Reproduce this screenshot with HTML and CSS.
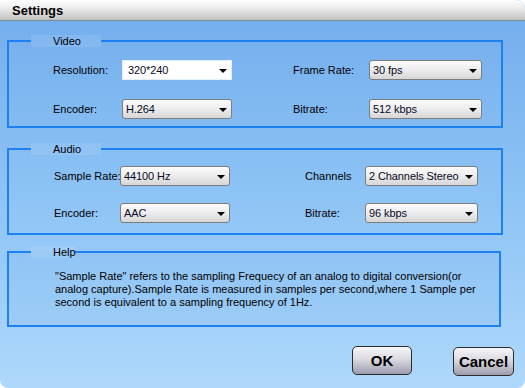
FILE: index.html
```html
<!DOCTYPE html>
<html lang="en">
  <head>
    <meta charset="UTF-8" />
    <title>Settings</title>
    <link rel="stylesheet" href="styles.css">
  </head>
  <body>
    <div class="window">
      <div class="titlebar">Settings</div>
      <div class="content">
        <fieldset class="group group-video">
          <legend>Video</legend>
          <div class="grid grid-video">
            <span class="label">Resolution:</span>
            <div class="combo combo-flat">320*240</div>
            <span class="label">Frame Rate:</span>
            <div class="combo">30 fps</div>
            <span class="label">Encoder:</span>
            <div class="combo">H.264</div>
            <span class="label">Bitrate:</span>
            <div class="combo">512 kbps</div>
          </div>
        </fieldset>
        <fieldset class="group group-audio">
          <legend>Audio</legend>
          <div class="grid grid-audio">
            <span class="label">Sample Rate:</span>
            <div class="combo">44100 Hz</div>
            <span class="label">Channels</span>
            <div class="combo">2 Channels Stereo</div>
            <span class="label">Encoder:</span>
            <div class="combo">AAC</div>
            <span class="label">Bitrate:</span>
            <div class="combo">96 kbps</div>
          </div>
        </fieldset>
        <fieldset class="group group-help">
          <legend class="legend-short">Help</legend>
          <p class="help-text">"Sample Rate" refers to the sampling Frequecy of an analog to digital conversion(or<br>analog capture).Sample Rate is measured in samples per second,where 1 Sample per<br>second is equivalent to a sampling frequency of 1Hz.</p>
        </fieldset>
        <div class="buttons">
          <button class="btn btn-ok">OK</button>
          <button class="btn btn-cancel">Cancel</button>
        </div>
      </div>
    </div>
  </body>
</html>
```

FILE: styles.css
```css
body {
  margin: 0;
  padding: 0;
  background: #fff;
  font-family: "Liberation Sans", Arial, sans-serif;
  font-size: 11px;
  color: #000;
}
.window {
  width: 525px;
  height: 388px;
  box-sizing: border-box;
  background: linear-gradient(#72acec, #8dc3f5 50%, #aed8fb);
  border-top-right-radius: 9px;
  border-bottom-left-radius: 8px;
  border-bottom-right-radius: 8px;
  overflow: hidden;
}
.titlebar {
  height: 20px;
  line-height: 22px;
  padding-left: 12px;
  font-size: 13px;
  font-weight: bold;
  color: #000;
  background: linear-gradient(#ffffff, #ececec 40%, #c2c2c2);
  border-bottom: 1px solid #7c8a9a;
}
.content {
  padding: 0 0 0 7px;
}
.group {
  width: 496px;
  box-sizing: border-box;
  margin: 0;
  border: 2px solid #1f80f2;
  padding: 0;
  min-width: 0;
}
.group legend {
  margin-left: 22px;
  padding: 0 0 0 22px;
  width: 70px;
  box-sizing: border-box;
  height: 12px;
  line-height: 12px;
  font-size: 11px;
  text-align: left;
  background: rgba(255, 255, 255, 0.09);
}
.group legend.legend-short {
  width: 44px;
}
.group-video {
  margin-top: 14px;
  padding: 13px 0 7px 0;
}
.group-audio {
  margin-top: 15px;
  padding: 11px 0 10px 0;
}
.group-help {
  width: 494px;
  margin-top: 11px;
  padding: 12px 0 16px 0;
  background: rgba(40, 110, 220, 0.05);
}
.grid {
  display: grid;
  align-items: center;
}
.grid-video {
  padding-left: 44px;
  grid-template-columns: 69px 171px 76px 113px;
  grid-template-rows: 20px 20px;
  row-gap: 19px;
}
.grid-audio {
  padding-left: 45px;
  grid-template-columns: 66px 185px 60px 113px;
  grid-template-rows: 20px 20px;
  row-gap: 17px;
}
.label {
  white-space: nowrap;
}
.combo {
  position: relative;
  width: 110px;
  height: 20px;
  box-sizing: border-box;
  padding-left: 3px;
  line-height: 19px;
  color: #0a0a28;
  border: 1px solid #7d7d7d;
  border-radius: 3px;
  background: linear-gradient(#fbfbfb, #eeeeee 45%, #d6d6d6);
  white-space: nowrap;
  letter-spacing: -0.1px;
}
.grid-video .combo:nth-child(4),
.grid-video .combo:nth-child(8),
.grid-audio .combo:nth-child(4),
.grid-audio .combo:nth-child(8) {
  width: 113px;
}
.combo::after {
  content: "";
  position: absolute;
  right: 4px;
  top: 8px;
  border-left: 4px solid transparent;
  border-right: 4px solid transparent;
  border-top: 4px solid #000;
}
.combo-flat {
  background: #fff;
  border-color: #e4eef8;
  border-radius: 0;
  padding-left: 5px;
}
.help-text {
  margin: 0;
  padding-left: 46px;
  line-height: 13px;
  font-size: 11px;
}
.buttons {
  display: flex;
  justify-content: flex-end;
  gap: 41px;
  margin-top: 19px;
  padding-right: 11px;
}
.btn {
  height: 29px;
  padding: 0;
  box-sizing: border-box;
  border: 1px solid #2c2c2c;
  border-radius: 5px;
  background: linear-gradient(#f6f6f8, #dadae0 45%, #9c9cb0);
  font-family: "Liberation Sans", Arial, sans-serif;
  font-size: 15px;
  font-weight: bold;
  color: #000;
  line-height: 24px;
}
.btn-ok {
  width: 60px;
}
.btn-cancel {
  width: 61px;
  margin-top: 1px;
  line-height: 26px;
}
```
